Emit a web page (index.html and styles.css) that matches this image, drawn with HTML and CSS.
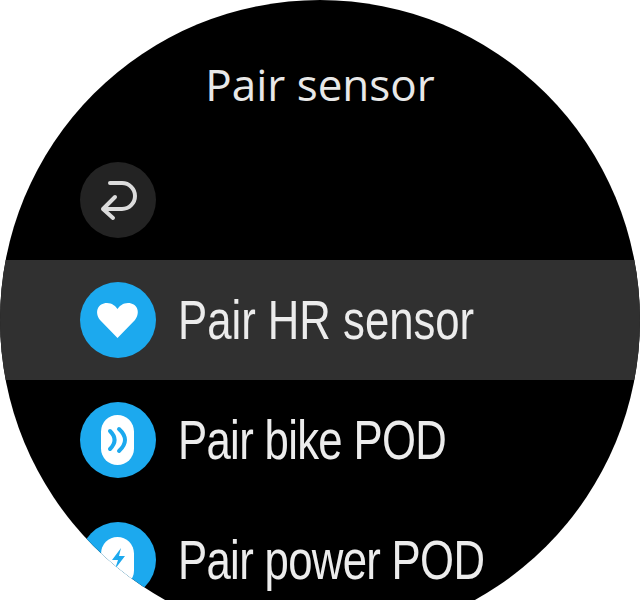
FILE: index.html
```html
<!DOCTYPE html>
<html lang="en">
<head>
  <meta charset="UTF-8" />
  <title>Pair sensor</title>
  <link rel="stylesheet" href="styles.css">
</head>
<body>
  <div class="watch">
    <h1 class="title">Pair sensor</h1>

    <div class="row">
      <span class="icon icon-back">
        <svg viewBox="0 0 76 76" width="76" height="76">
          <path class="back-arrow" d="M30 21H42A13 13 0 0 1 42 47H23M35 35L23 47L33 56" />
        </svg>
      </span>
    </div>

    <div class="row row-active">
      <span class="icon">
        <svg viewBox="0 0 76 76" width="76" height="76">
          <path class="white" d="M37.5 56L20 38C14 30 18 21 27 21C32 21 35.5 24 37.5 27C39.5 24 43 21 48 21C57 21 61 30 55 38Z" />
        </svg>
      </span>
      <span class="label">Pair HR sensor</span>
    </div>

    <div class="row">
      <span class="icon">
        <svg viewBox="0 0 76 76" width="76" height="76">
          <rect class="white" x="21" y="13" width="33" height="50" rx="16.5" />
          <path class="pod-wave" d="M30 29Q39 38 30 47M39 27Q51 38 39 49" />
        </svg>
      </span>
      <span class="label label-pod">Pair bike POD</span>
    </div>

    <div class="row">
      <span class="icon">
        <svg viewBox="0 0 76 76" width="76" height="76">
          <rect class="white" x="21" y="15" width="33" height="50" rx="16.5" />
          <path class="bolt" d="M41 26L32 38H38L35 47L45 34H39Z" />
        </svg>
      </span>
      <span class="label label-pod">Pair power POD</span>
    </div>
  </div>
</body>
</html>
```

FILE: styles.css
```css
html, body {
    margin: 0;
    height: 600px;
    overflow: hidden;
    background: #ffffff;
}
.watch {
    width: 640px;
    height: 600px;
    clip-path: circle(320px at 320px 320px);
    overflow: hidden;
    background: #000000;
    display: flex;
    flex-direction: column;
}
.title {
    flex: 0 0 140px;
    margin: 0;
    padding-top: 54px;
    box-sizing: border-box;
    text-align: center;
    font-family: "Open Sans", sans-serif;
    font-weight: 400;
    font-size: 44px;
    line-height: 60px;
    color: #e8e8e8;
}
.row {
    flex: 0 0 120px;
    display: flex;
    align-items: center;
    gap: 22px;
    padding-left: 80px;
}
.row-active {
    background: #303030;
}
.icon {
    flex: 0 0 76px;
    width: 76px;
    height: 76px;
    border-radius: 50%;
    background: #1ca9ee;
}
.icon svg {
    display: block;
}
.icon-back {
    background: #232323;
}
.back-arrow {
    fill: none;
    stroke: #dcdcdc;
    stroke-width: 4;
    stroke-linecap: round;
    stroke-linejoin: round;
}
.white {
    fill: #ffffff;
}
.pod-wave {
    fill: none;
    stroke: #1ca9ee;
    stroke-width: 4;
    stroke-linecap: round;
}
.bolt {
    fill: #1ca9ee;
}
.label {
    font-family: "Liberation Sans", sans-serif;
    font-size: 56px;
    line-height: 64px;
    color: #ececec;
    white-space: nowrap;
    transform: scaleX(0.78);
    transform-origin: left center;
}
.label-pod {
    letter-spacing: -0.85px;
}
```
